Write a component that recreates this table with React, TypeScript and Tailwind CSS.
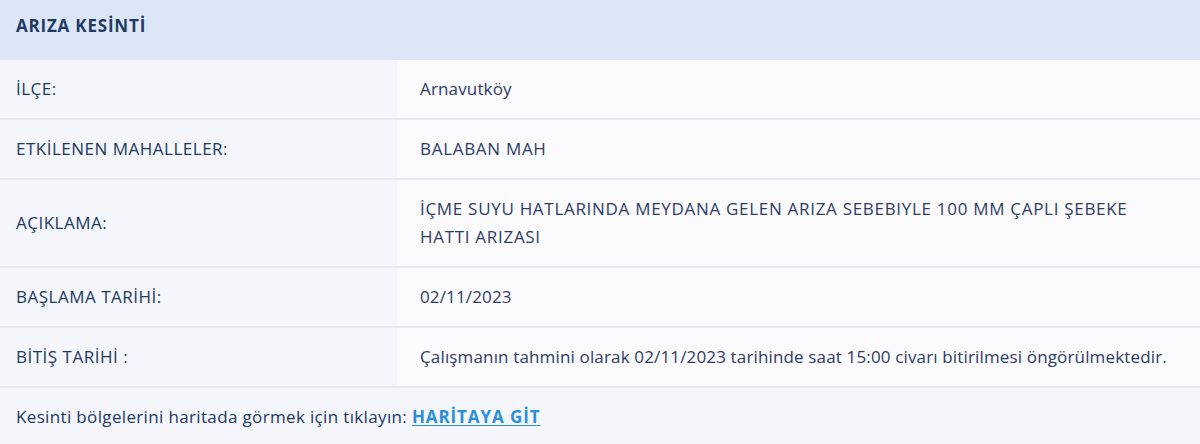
import React from 'react';

const rows: { label: string; value: string }[] = [
  { label: 'İLÇE:', value: 'Arnavutköy' },
  { label: 'ETKİLENEN MAHALLELER:', value: 'BALABAN MAH' },
  {
    label: 'AÇIKLAMA:',
    value: 'İÇME SUYU HATLARINDA MEYDANA GELEN ARIZA SEBEBIYLE 100 MM ÇAPLI ŞEBEKE HATTI ARIZASI',
  },
  { label: 'BAŞLAMA TARİHİ:', value: '02/11/2023' },
  {
    label: 'BİTİŞ TARİHİ :',
    value: 'Çalışmanın tahmini olarak 02/11/2023 tarihinde saat 15:00 civarı bitirilmesi öngörülmektedir.',
  },
];

const isUpper = (s: string) => /[A-Z]/.test(s) && s === s.toLocaleUpperCase('tr');

export default function App() {
  return (
    <div className="w-[1200px] h-[444px] bg-[#f4f6fb] font-['Open_Sans','Noto_Sans',sans-serif] text-[17px]">
      {/* başlık */}
      <div className="h-[60px] bg-[#dde6f6] flex items-center px-4 pb-[8px]">
        <h2 className="font-bold text-[#1f3a66] tracking-[0.8px]">ARIZA KESİNTİ</h2>
      </div>

      {/* tablo */}
      <div>
        {rows.map((row) => (
          <div key={row.label} className="flex border-b-2 border-[#e6e9ef]">
            <div className="w-[397px] shrink-0 bg-[#f4f6fb] flex items-center px-4 font-medium text-[#22395f] tracking-[0.5px]">
              {row.label}
            </div>
            <div className="flex-1 bg-[#fbfbfe] flex items-center pl-[23px] pr-4 py-[15px] text-[#2f3b63] leading-[28px]">
              <span
                className={
                  isUpper(row.value) ? 'tracking-[0.7px] max-w-[730px]' : 'tracking-[0.15px]'
                }
              >
                {row.value}
              </span>
            </div>
          </div>
        ))}
      </div>

      {/* alt bilgi */}
      <div className="h-[56px] flex items-center px-4 pt-[2px] text-[#22395f] tracking-[0.35px]">
        <span>
          Kesinti bölgelerini haritada görmek için tıklayın:{' '}
          <a href="#" className="font-bold text-[#2a8fd7] underline underline-offset-2 tracking-[0.9px]">
            HARİTAYA GİT
          </a>
        </span>
      </div>
    </div>
  );
}
